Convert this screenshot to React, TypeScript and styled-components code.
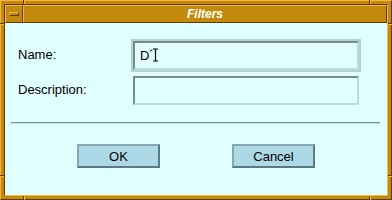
import React from 'react';
import styled, { createGlobalStyle } from 'styled-components';

const frame = {
  face: '#c48a0e',
  light: '#f8b440',
  dark: '#5c3c00',
};

const GlobalStyle = createGlobalStyle`
  html, body {
    margin: 0;
    padding: 0;
    background: #ffffff;
  }
  body {
    font-family: "Liberation Sans", Arial, sans-serif;
  }
`;

function App() {
  return (
    <>
      <GlobalStyle />
      <StyledWindow>
        <Notch $side="top" $at={23} />
        <Notch $side="top" $at={369} />
        <Notch $side="bottom" $at={23} />
        <Notch $side="bottom" $at={369} />
        <Notch $side="left" $at={23} />
        <Notch $side="left" $at={175} />
        <Notch $side="right" $at={23} />
        <Notch $side="right" $at={175} />
        <StyledInner>
          <StyledTitleBar>
            <StyledMenuButton>
              <StyledMenuBar />
            </StyledMenuButton>
            <StyledTitle>Filters</StyledTitle>
          </StyledTitleBar>
          <StyledContent>
            <StyledForm>
              <StyledRow>
                <StyledLabel>Name:</StyledLabel>
                <StyledRing $focused>
                  <StyledField>
                    <span>D</span>
                    <TextCursor />
                  </StyledField>
                </StyledRing>
              </StyledRow>
              <StyledRow>
                <StyledLabel>Description:</StyledLabel>
                <StyledRing>
                  <StyledField />
                </StyledRing>
              </StyledRow>
            </StyledForm>
            <StyledSeparator />
            <StyledButtons>
              <StyledButton type="button">OK</StyledButton>
              <StyledButton type="button">Cancel</StyledButton>
            </StyledButtons>
          </StyledContent>
        </StyledInner>
      </StyledWindow>
    </>
  );
}

function TextCursor() {
  return (
    <StyledCursor width="10" height="14" viewBox="0 0 10 14">
      <path d="M1 1.5 L3 3.5 M3 1.5 L1 3.5" stroke="#000" strokeWidth="0.8" fill="none" />
      <path d="M4 1 H9 M6.5 1 V13 M4 13 H9" stroke="#000" strokeWidth="1.2" fill="none" />
    </StyledCursor>
  );
}

const StyledWindow = styled.div`
  position: relative;
  box-sizing: border-box;
  width: 392px;
  height: 200px;
  padding: 3px;
  background: ${frame.face};
  border-top: 1px solid ${frame.light};
  border-left: 1px solid ${frame.light};
  border-bottom: 1px solid ${frame.dark};
  border-right: 1px solid ${frame.dark};
  display: flex;
`;

const Notch = styled.div<{ $side: 'top' | 'bottom' | 'left' | 'right'; $at: number }>`
  position: absolute;
  ${({ $side, $at }) =>
    $side === 'top' || $side === 'bottom'
      ? `left: ${$at - 1}px; width: 1px; height: 5px; ${$side}: -1px;
         border-right: 1px solid ${frame.light}; background: ${frame.dark};`
      : `top: ${$at - 1}px; height: 1px; width: 5px; ${$side}: -1px;
         border-bottom: 1px solid ${frame.light}; background: ${frame.dark};`}
`;

const StyledInner = styled.div`
  flex: 1;
  display: flex;
  flex-direction: column;
  border-top: 1px solid ${frame.dark};
  border-left: 1px solid ${frame.dark};
  border-bottom: 1px solid ${frame.light};
  border-right: 1px solid ${frame.light};
  position: relative;
  z-index: 1;
`;

const StyledTitleBar = styled.div`
  display: flex;
  height: 18px;
`;

const StyledMenuButton = styled.div`
  box-sizing: border-box;
  width: 18px;
  display: flex;
  align-items: center;
  justify-content: center;
  background: ${frame.face};
  border-top: 1px solid ${frame.light};
  border-left: 1px solid ${frame.light};
  border-bottom: 1px solid ${frame.dark};
  border-right: 1px solid ${frame.dark};
`;

const StyledMenuBar = styled.div`
  box-sizing: border-box;
  width: 10px;
  height: 4px;
  background: ${frame.face};
  border-top: 1px solid ${frame.light};
  border-left: 1px solid ${frame.light};
  border-bottom: 1px solid ${frame.dark};
  border-right: 1px solid ${frame.dark};
`;

const StyledTitle = styled.div`
  box-sizing: border-box;
  flex: 1;
  display: flex;
  align-items: center;
  justify-content: center;
  background: ${frame.face};
  border-top: 1px solid ${frame.light};
  border-left: 1px solid ${frame.light};
  border-bottom: 1px solid ${frame.dark};
  border-right: 1px solid ${frame.dark};
  color: #ffffff;
  font-size: 12px;
  font-weight: bold;
  font-style: italic;
`;

const StyledContent = styled.div`
  flex: 1;
  display: flex;
  flex-direction: column;
  background: #e0ffff;
  padding: 16px 0 0;
`;

const StyledForm = styled.div`
  display: flex;
  flex-direction: column;
  gap: 2px;
  padding-left: 13px;
`;

const StyledRow = styled.div`
  display: flex;
  align-items: center;
`;

const StyledLabel = styled.div`
  width: 113px;
  font-size: 13px;
  color: #000000;
  margin-top: -2px;
`;

const StyledRing = styled.div<{ $focused?: boolean }>`
  box-sizing: border-box;
  width: 230px;
  height: 33px;
  padding: 2px;
  background: ${({ $focused }) => ($focused ? '#b4d2d2' : 'transparent')};
`;

const StyledField = styled.div`
  box-sizing: border-box;
  height: 29px;
  display: flex;
  align-items: center;
  padding: 0 5px;
  background: #e0ffff;
  border-top: 2px solid #788c8c;
  border-left: 2px solid #788c8c;
  border-bottom: 2px solid #bcdada;
  border-right: 2px solid #bcdada;
  font-size: 13px;
  color: #000000;
`;

const StyledCursor = styled.svg`
  margin-top: -1px;
`;

const StyledSeparator = styled.div`
  margin: 15px 7px 0 6px;
  height: 1px;
  background: #7c9090;
  border-bottom: 1px solid #c4e2e2;
`;

const StyledButtons = styled.div`
  display: flex;
  justify-content: center;
  gap: 72px;
  margin-top: 20px;
`;

const StyledButton = styled.button`
  box-sizing: border-box;
  width: 83px;
  height: 24px;
  padding: 0;
  background: #add8e6;
  border-top: 2px solid #86a8b4;
  border-left: 2px solid #86a8b4;
  border-bottom: 2px solid #5e7a80;
  border-right: 2px solid #5e7a80;
  font-family: "Liberation Sans", Arial, sans-serif;
  font-size: 13px;
  color: #000000;
`;

export default App;
